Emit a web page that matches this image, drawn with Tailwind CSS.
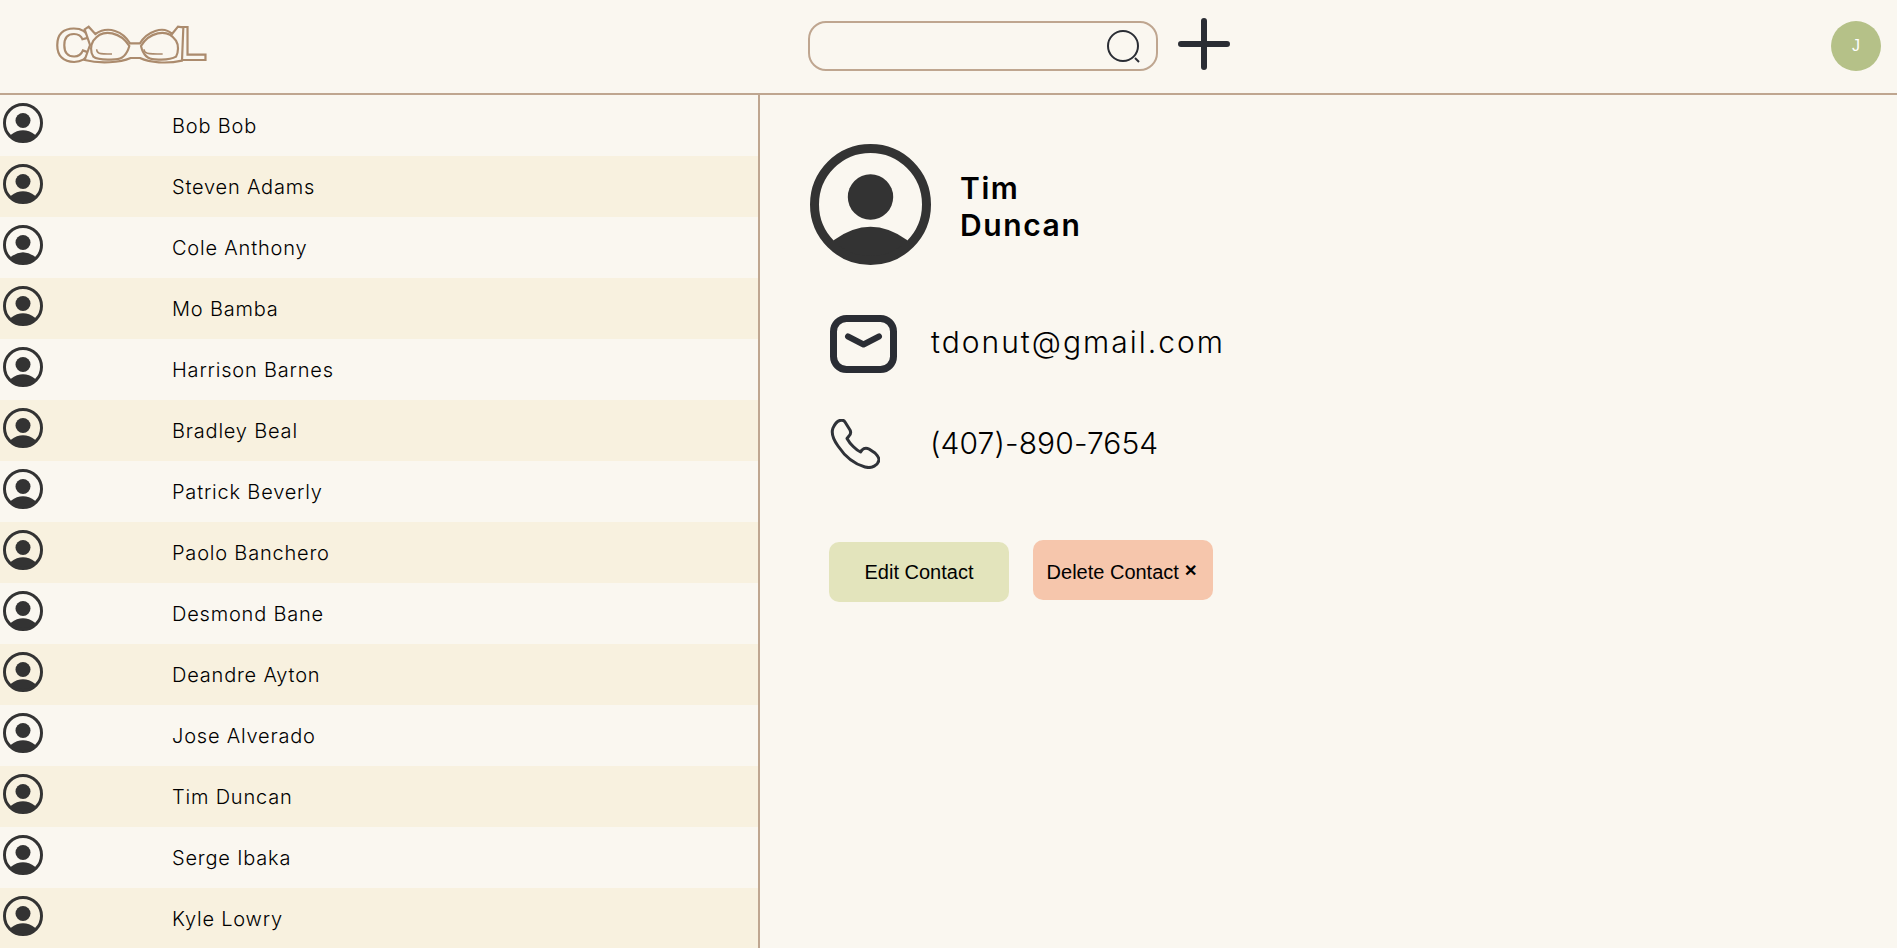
<!DOCTYPE html>
<html lang="en">
<head>
    <meta charset="UTF-8">
    <title>Contacts</title>
    <script src="https://cdn.jsdelivr.net/npm/@tailwindcss/browser@4"></script>
</head>
<body class="bg-[#faf7f0] h-[948px] overflow-hidden font-['Inter',sans-serif]">
    <svg class="hidden">
        <symbol id="person" viewBox="0 0 121 121">
            <circle cx="60.5" cy="53" r="22.7" fill="#333"/>
            <path d="M24 96 Q60.5 69.5 97 96 L100 100 A56 56 0 0 1 21 100 Z" fill="#333"/>
            <circle cx="60.5" cy="60.5" r="56" fill="none" stroke="#333" stroke-width="9"/>
        </symbol>
    </svg>

    <!-- Header -->
    <header class="relative h-[95px] border-b-2 border-[#bfa690] flex items-center">
        <svg class="ml-[40px] mt-[-13px] overflow-visible" width="190" height="60" viewBox="0 0 570 180" fill="none" stroke="#ab8b6d" stroke-width="6.5">
            <text x="46" y="155" font-family="Liberation Sans" font-weight="700" font-size="146">C</text>
            <text x="412" y="151" font-family="Liberation Sans" font-weight="700" font-size="146">L</text>
            <path fill="#faf7f0" d="M134 58 L146 50 L166 72 C205 45 250 65 270 100 L300 100 C320 65 370 45 396 72 L414 50 L430 52 L426 152 C380 162 330 158 300 144 L272 144 C240 158 180 162 134 150 L150 105 Z"/>
            <path d="M160 92 C190 50 245 70 268 108 C262 130 250 148 225 148 C195 150 170 148 160 140 C150 125 152 105 160 92 Z"/>
            <path d="M303 108 C325 70 380 50 408 92 C416 105 416 125 408 140 C395 148 370 150 345 148 C320 148 308 130 303 108 Z"/>
            <path d="M170 118 C170 130 175 132 216 132 M312 118 C312 130 320 132 368 132" stroke-width="4.5"/>
        </svg>
        <div class="ml-[578px] mt-[-2px] flex items-center">
            <div class="w-[350px] h-[50px] rounded-[18px] border-2 border-[#bfa690] flex items-center justify-end pr-[14px] pt-[2px]">
                <svg width="36" height="36" viewBox="0 0 36 36" fill="none" stroke="#2a2d34">
                    <circle cx="17" cy="17" r="15" stroke-width="2"/>
                    <path d="M29 29 L33 33" stroke-width="2"/>
                </svg>
            </div>
            <svg class="ml-[20px] mt-[-3px]" width="52" height="52" viewBox="0 0 52 52" fill="none" stroke="#2a2d34" stroke-width="6" stroke-linecap="round">
                <path d="M26 3 V49 M3 26 H49"/>
            </svg>
        </div>
        <div class="ml-auto mr-[16px] mt-[-2px] w-[50px] h-[50px] rounded-full bg-[#b5c188] flex items-center justify-center text-white text-[16px] font-['Liberation_Sans',sans-serif]">J</div>
    </header>

    <main class="flex h-[853px]">
        <!-- Contact list -->
        <div class="w-[760px] shrink-0 border-r-2 border-[#bfa690] overflow-hidden text-[20px] font-light tracking-[0.8px] text-black">
            <div class="h-[61px] flex pt-[8px] pl-[3px]"><svg class="w-[40px] h-[40px]"><use href="#person"/></svg><span class="ml-[129px] mt-[8px]">Bob Bob</span></div>
            <div class="h-[61px] flex pt-[8px] pl-[3px] bg-[#f8f1df]"><svg class="w-[40px] h-[40px]"><use href="#person"/></svg><span class="ml-[129px] mt-[8px]">Steven Adams</span></div>
            <div class="h-[61px] flex pt-[8px] pl-[3px]"><svg class="w-[40px] h-[40px]"><use href="#person"/></svg><span class="ml-[129px] mt-[8px]">Cole Anthony</span></div>
            <div class="h-[61px] flex pt-[8px] pl-[3px] bg-[#f8f1df]"><svg class="w-[40px] h-[40px]"><use href="#person"/></svg><span class="ml-[129px] mt-[8px]">Mo Bamba</span></div>
            <div class="h-[61px] flex pt-[8px] pl-[3px]"><svg class="w-[40px] h-[40px]"><use href="#person"/></svg><span class="ml-[129px] mt-[8px]">Harrison Barnes</span></div>
            <div class="h-[61px] flex pt-[8px] pl-[3px] bg-[#f8f1df]"><svg class="w-[40px] h-[40px]"><use href="#person"/></svg><span class="ml-[129px] mt-[8px]">Bradley Beal</span></div>
            <div class="h-[61px] flex pt-[8px] pl-[3px]"><svg class="w-[40px] h-[40px]"><use href="#person"/></svg><span class="ml-[129px] mt-[8px]">Patrick Beverly</span></div>
            <div class="h-[61px] flex pt-[8px] pl-[3px] bg-[#f8f1df]"><svg class="w-[40px] h-[40px]"><use href="#person"/></svg><span class="ml-[129px] mt-[8px]">Paolo Banchero</span></div>
            <div class="h-[61px] flex pt-[8px] pl-[3px]"><svg class="w-[40px] h-[40px]"><use href="#person"/></svg><span class="ml-[129px] mt-[8px]">Desmond Bane</span></div>
            <div class="h-[61px] flex pt-[8px] pl-[3px] bg-[#f8f1df]"><svg class="w-[40px] h-[40px]"><use href="#person"/></svg><span class="ml-[129px] mt-[8px]">Deandre Ayton</span></div>
            <div class="h-[61px] flex pt-[8px] pl-[3px]"><svg class="w-[40px] h-[40px]"><use href="#person"/></svg><span class="ml-[129px] mt-[8px]">Jose Alverado</span></div>
            <div class="h-[61px] flex pt-[8px] pl-[3px] bg-[#f8f1df]"><svg class="w-[40px] h-[40px]"><use href="#person"/></svg><span class="ml-[129px] mt-[8px]">Tim Duncan</span></div>
            <div class="h-[61px] flex pt-[8px] pl-[3px]"><svg class="w-[40px] h-[40px]"><use href="#person"/></svg><span class="ml-[129px] mt-[8px]">Serge Ibaka</span></div>
            <div class="h-[61px] flex pt-[8px] pl-[3px] bg-[#f8f1df]"><svg class="w-[40px] h-[40px]"><use href="#person"/></svg><span class="ml-[129px] mt-[8px]">Kyle Lowry</span></div>
        </div>

        <!-- Contact details -->
        <div class="flex-1 pl-[50px] pt-[49px]">
            <div class="flex items-center">
                <svg class="w-[121px] h-[121px]"><use href="#person"/></svg>
                <div class="ml-[29px] text-[30px] leading-[37px] font-semibold tracking-[1.6px] text-black mt-[4px]">Tim<br>Duncan</div>
            </div>
            <div class="flex items-center mt-[50px] ml-[20px] h-[58px]">
                <svg width="67" height="58" viewBox="0 0 67 58" fill="none" stroke="#2a2d34" stroke-width="7" stroke-linecap="round" stroke-linejoin="round">
                    <rect x="3.5" y="3.5" width="60" height="51" rx="13"/>
                    <path d="M18 21.5 L33.5 29.5 L49 21.5" stroke-width="6"/>
                </svg>
                <span class="ml-[34px] mt-[-4px] text-[30px] font-light tracking-[2px] text-black">tdonut@gmail.com</span>
            </div>
            <div class="flex items-center mt-[46px] ml-[20px] h-[50px]">
                <svg width="50" height="50" viewBox="0 0 50 50" fill="none" stroke="#2f3238" stroke-width="3" stroke-linejoin="round">
                    <path d="M3 9 C1 14 3 20 8 27 C14 36 24 45 35 48 C42 50 48 46 49 41 C49 38 47 36 45 34 L39 30 C36 28.5 34 29 32 31 L30.5 33 C26 31 20 25 17 19.5 L19 17 C21 15 21 13 20 11 L15 3 C13 0 7 0 3 9 Z"/>
                </svg>
                <span class="ml-[50px] mt-[-2px] text-[30px] font-light tracking-[0.1px] text-black">(407)-890-7654</span>
            </div>
            <div class="flex items-start mt-[71px] ml-[19px] gap-[24px] text-[20px] text-black font-['Liberation_Sans',sans-serif]">
                <button class="w-[180px] h-[60px] mt-[2px] rounded-[10px] bg-[#e3e4bc]">Edit Contact</button>
                <button class="w-[180px] h-[60px] pt-[4px] pr-[2px] rounded-[10px] bg-[#f6c6ac]">Delete Contact <span class="text-[16px] font-bold align-[3px]">✕</span></button>
            </div>
        </div>
    </main>
</body>
</html>
